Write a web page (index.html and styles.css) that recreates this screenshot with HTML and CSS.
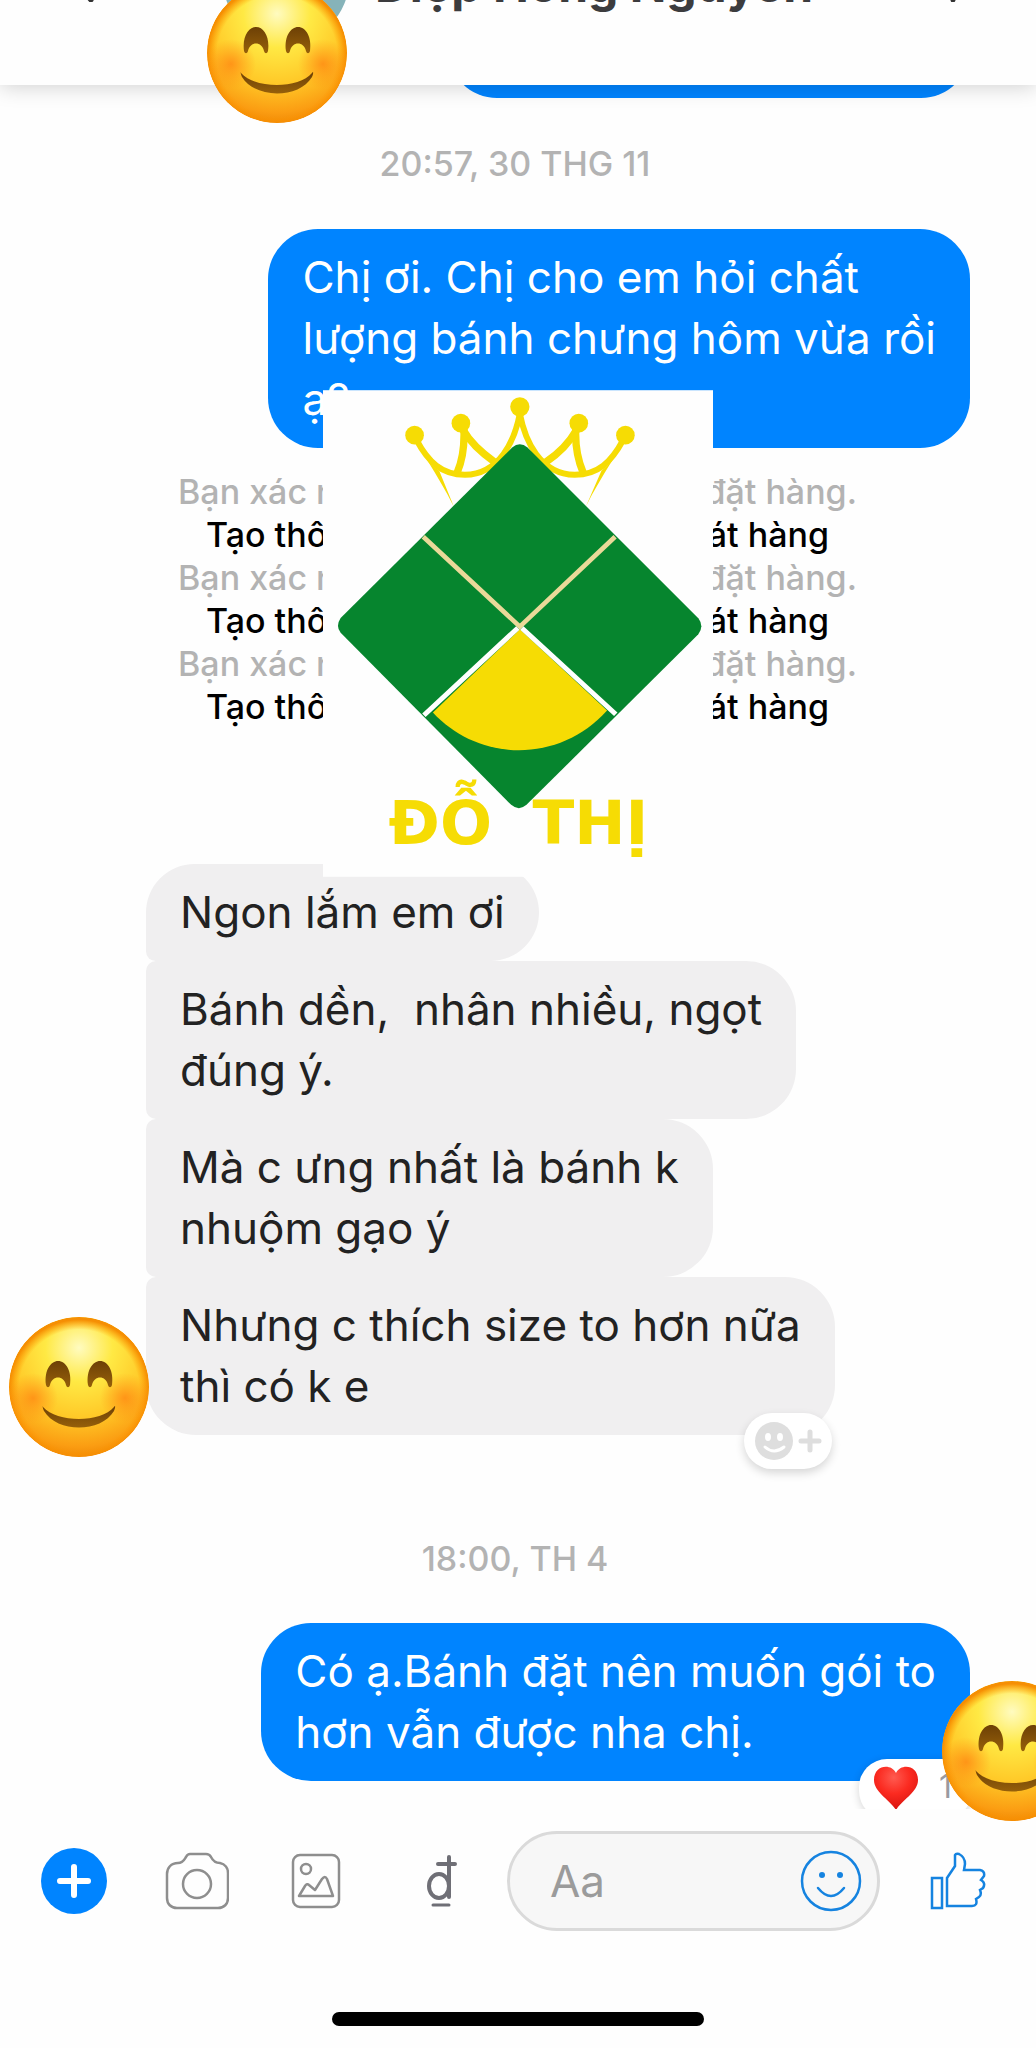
FILE: index.html
```html
<!DOCTYPE html>
<html lang="vi">
<head>
<meta charset="utf-8">
<meta name="viewport" content="width=device-width, initial-scale=1">
<title>Diệp Hồng Nguyên</title>
<link rel="stylesheet" href="styles.css">
</head>
<body>
<svg class="defs" aria-hidden="true">
  <defs>
    <radialGradient id="face" cx="50%" cy="22%" r="80%">
      <stop offset="0" stop-color="#fffbc0"/>
      <stop offset=".3" stop-color="#ffe944"/>
      <stop offset=".62" stop-color="#ffc928"/>
      <stop offset=".88" stop-color="#fb9d12"/>
      <stop offset="1" stop-color="#ee8504"/>
    </radialGradient>
    <radialGradient id="rim" cx="50%" cy="52%" r="50%">
      <stop offset=".86" stop-color="#ff9a00" stop-opacity="0"/>
      <stop offset="1" stop-color="#f58a00" stop-opacity=".95"/>
    </radialGradient>
    <radialGradient id="blush">
      <stop offset="0" stop-color="#ff7e10" stop-opacity=".7"/>
      <stop offset="1" stop-color="#ff8a10" stop-opacity="0"/>
    </radialGradient>
    <linearGradient id="brown" x1="0" y1="0" x2="0" y2="1">
      <stop offset="0" stop-color="#6d4006"/>
      <stop offset="1" stop-color="#96600a"/>
    </linearGradient>
    <clipPath id="disc"><circle cx="70" cy="70" r="70"/></clipPath>
    <symbol id="smile" viewBox="0 0 140 140">
      <g clip-path="url(#disc)">
        <circle cx="70" cy="70" r="70" fill="url(#face)"/>
        <circle cx="70" cy="70" r="70" fill="url(#rim)"/>
        <circle cx="24" cy="81" r="25" fill="url(#blush)"/>
        <circle cx="116" cy="81" r="25" fill="url(#blush)"/>
      </g>
      <path d="M37 68C35 53 42 44 49 44c8 0 14 10 12 24-1 3-3 3-4 0-2-10-14-10-16 0-1 3-3 3-4 0z" fill="url(#brown)"/>
      <path d="M79 68c-2-15 5-24 12-24 8 0 14 10 12 24-1 3-3 3-4 0-2-10-14-10-16 0-1 3-3 3-4 0z" fill="url(#brown)"/>
      <path d="M34 90c14 16 58 16 71 0 2-3 1 2 0 4-13 22-57 22-70 0-1-2-2-7-1-4z" fill="url(#brown)"/>
    </symbol>
  </defs>
</svg>

<header class="topbar">
  <button class="icon-btn back" aria-label="Quay lại"><svg viewBox="0 0 24 40" width="24" height="40"><path d="M20 2 4 20l16 18" fill="none" stroke="#333" stroke-width="5" stroke-linecap="round"/></svg></button>
  <span class="avatar"><svg class="emoji"><use href="#smile"/></svg></span>
  <h1 class="name">Diệp Hồng Nguyên</h1>
  <button class="icon-btn call" aria-label="Gọi"><svg viewBox="0 0 24 40" width="24" height="40"><path d="M4 2l8 36 8-36" fill="none" stroke="#333" stroke-width="5" stroke-linejoin="round"/></svg></button>
</header>

<main class="thread">
  <div class="bubble sent stub"></div>
  <time class="stamp">20:57, 30 THG 11</time>
  <p class="bubble sent">Chị ơi. Chị cho em hỏi chất<br>lượng bánh chưng hôm vừa rồi<br>ạ?</p>

  <div class="notices">
    <p class="note"><span>Bạn xác nhận</span><span>đặt hàng.</span></p>
    <a class="note action" href="#"><span>Tạo thông tin</span><span>phát hàng</span></a>
    <p class="note"><span>Bạn xác nhận</span><span>đặt hàng.</span></p>
    <a class="note action" href="#"><span>Tạo thông tin</span><span>phát hàng</span></a>
    <p class="note"><span>Bạn xác nhận</span><span>đặt hàng.</span></p>
    <a class="note action" href="#"><span>Tạo thông tin</span><span>phát hàng</span></a>
    <svg class="logo" viewBox="69 30 1171 1461" role="img" aria-label="Đỗ Thị">
      <rect x="69" y="30" width="1171" height="1461" fill="#fefefe"/>
      <g fill="none" stroke="#f6dc04" stroke-width="18">
        <path d="M660 100C645 180 600 282 495 284 425 284 385 245 350 180"/>
        <path d="M660 100C675 180 720 282 825 284 895 284 935 245 970 180"/>
        <path d="M492 145c2 45-4 95-20 132M828 145c-2 45 6 95 22 132" stroke-width="22"/>
        <path d="M490 150c20 35 55 68 95 96M830 150c-20 35-50 68-92 96" stroke-width="22"/>
      </g>
      <g fill="#f6dc04">
        <path d="M350 190 396 255 418 272 462 380C440 335 405 275 350 190zM970 190 924 255 905 272 858 380C880 335 915 275 970 190z"/>
        <circle cx="344" cy="165" r="28"/><circle cx="483" cy="129" r="28"/><circle cx="660" cy="80" r="29"/><circle cx="837" cy="129" r="28"/><circle cx="977" cy="165" r="28"/>
      </g>
      <path d="M637 202q23-20 46 0L1196 715q18 23 0 48L680 1275q-23 20-46 0L122 758q-16-20 0-44z" fill="#06852e"/>
      <path d="M370 470 660 740 946 470" fill="none" stroke="#ead999" stroke-width="14"/>
      <path d="M399 998 660 748 922 992C780 1150 540 1150 399 998z" fill="#f6dc04"/>
      <path d="M372 1006 654 744M666 744 948 1003" stroke="#fff" stroke-width="15"/>
      <g fill="#f6dc04" class="logo-text"><text x="266" y="1392">ĐỖ</text><text x="698" y="1392">THỊ</text></g>
    </svg>
  </div>

  <p class="bubble received first">Ngon lắm em ơi</p>
  <p class="bubble received">Bánh dền,&nbsp; nhân nhiều, ngọt<br>đúng ý.</p>
  <p class="bubble received">Mà c ưng nhất là bánh k<br>nhuộm gạo ý</p>
  <div class="bubble received last">
    <p>Nhưng c thích size to hơn nữa<br>thì có k e</p>
    <svg class="emoji sender"><use href="#smile"/></svg>
    <button class="react" aria-label="Thêm cảm xúc"><svg viewBox="0 0 88 56" width="88" height="56"><circle cx="30" cy="28" r="19" fill="#dedede"/><g fill="#fff"><ellipse cx="24" cy="24" rx="3" ry="4"/><ellipse cx="36" cy="24" rx="3" ry="4"/></g><path d="M21 34q9 8 19 0" fill="none" stroke="#fff" stroke-width="3" stroke-linecap="round"/><path d="M66 19v18M57 28h18" stroke="#dedede" stroke-width="5" stroke-linecap="round"/></svg></button>
  </div>

  <time class="stamp later">18:00, TH 4</time>
  <div class="bubble sent final">
    <p>Có ạ.Bánh đặt nên muốn gói to<br>hơn vẫn được nha chị.</p>
    <div class="hearts">
      <div class="pill"><svg viewBox="0 0 46 46" width="46" height="46"><defs><radialGradient id="red" cx="45%" cy="25%" r="75%"><stop offset="0" stop-color="#ff5a50"/><stop offset=".5" stop-color="#fb2a20"/><stop offset="1" stop-color="#d8140f"/></radialGradient></defs><path d="M23 8C18-2 1 0 1 15c0 12 15 19 22 30 7-11 22-18 22-30C45 0 28-2 23 8z" fill="url(#red)"/></svg><span>1</span></div>
    </div>
    <svg class="emoji edge"><use href="#smile"/></svg>
  </div>
</main>

<footer class="composer">
  <button class="icon-btn" aria-label="Thêm"><svg viewBox="0 0 66 66" width="66" height="66"><circle cx="33" cy="33" r="33" fill="#0084ff"/><path d="M33 19v28M19 33h28" stroke="#fff" stroke-width="6" stroke-linecap="round"/></svg></button>
  <button class="icon-btn camera" aria-label="Máy ảnh"><svg viewBox="0 0 64 58" width="64" height="58" fill="none" stroke="#8e8e8e" stroke-width="2.5"><path d="M13 11c5 0 6-3 8-6 1-2 2-3 4-3h16c3 0 4 1 5 3 2 4 4 6 9 6 5 1 8 5 8 10v25c0 6-4 10-10 10H12C6 56 2 52 2 46V22c0-6 4-11 11-11z"/><circle cx="32" cy="32" r="14"/></svg></button>
  <button class="icon-btn photo" aria-label="Ảnh"><svg viewBox="0 0 50 56" width="50" height="56" fill="none" stroke="#8e8e8e" stroke-width="2.5" stroke-linejoin="round"><rect x="2" y="2" width="46" height="52" rx="7"/><circle cx="15" cy="16" r="5"/><path d="M8 43 14 33q2-3 4-1l6 5 7-11q3-4 5 0l6 17z"/></svg></button>
  <button class="icon-btn money" aria-label="Chuyển tiền"><svg viewBox="0 0 30 52" width="30" height="52" fill="none" stroke="#6f6f76" stroke-width="4" stroke-linecap="round"><path d="M22 2v40M11 9h17"/><ellipse cx="12" cy="31" rx="10" ry="12"/><path d="M6 50h16" stroke-width="3"/></svg></button>
  <div class="field">
    <input type="text" placeholder="Aa" aria-label="Tin nhắn">
    <button class="icon-btn" aria-label="Biểu tượng cảm xúc"><svg viewBox="0 0 62 62" width="62" height="62" fill="none" stroke="#1583e0" stroke-width="2.5"><circle cx="31" cy="31" r="29"/><path d="M18 38q13 16 26 0" stroke-linecap="round"/><g fill="#1583e0" stroke="none"><circle cx="22" cy="25" r="3"/><circle cx="40" cy="25" r="3"/></g></svg></button>
  </div>
  <button class="icon-btn" aria-label="Thích"><svg viewBox="0 0 56 58" width="56" height="58" fill="none" stroke="#1583e0" stroke-width="2.5"><path d="M2 26h10v30H2zM17 26l8-12V3q1-2 4-1 6 3 6 10l-1 6h16q5 1 4 6l-3 4q5 3 2 8l-3 2q2 5-1 7l-3 2q2 7-4 7H17z"/></svg></button>
</footer>
<div class="home-bar"></div>
</body>
</html>
```
FILE: styles.css
```css
* { box-sizing: border-box; }
body {
  margin: 0;
  min-height: 100vh;
  display: flex;
  flex-direction: column;
  background: #fefefe;
  color: #222;
  font-family: Inter, "Liberation Sans", sans-serif;
  overflow-x: hidden;
}
p, h1 { margin: 0; }
button { border: 0; padding: 0; background: none; font: inherit; }
svg { display: block; }
.defs { position: absolute; width: 0; height: 0; }
.emoji { width: 140px; height: 140px; }

.topbar {
  display: flex;
  height: 85px;
  padding: 0 71px;
  background: #fefefe;
  box-shadow: 0 2px 20px rgba(0, 0, 0, .18);
  position: relative;
  z-index: 2;
}
.back, .call { margin-top: -38px; align-self: flex-start; }
.avatar {
  width: 126px;
  height: 126px;
  margin: -83px 26px 0 128px;
  border-radius: 50%;
  background: #86b3b9;
  position: relative;
}
.avatar .emoji { position: absolute; left: -16px; top: 66px; }
.name {
  flex: 1;
  margin-top: -43px;
  font-size: 48px;
  line-height: 56px;
  font-weight: 700;
  color: #3c3c3e;
  white-space: nowrap;
}

.thread {
  display: flex;
  flex-direction: column;
  align-items: flex-start;
  padding: 0 66px 0 146px;
}
.stamp {
  margin: 46px 6px 45px 0;
  padding-right: 80px;
  align-self: center;
  font-size: 34px;
  line-height: 40px;
  font-weight: 500;
  color: #b3b3b3;
}
.bubble {
  padding: 18px 34px;
  border-radius: 50px;
  font-size: 44px;
  line-height: 61px;
  white-space: nowrap;
}
.sent { align-self: flex-end; background: #0084ff; color: #fff; position: relative; }
.stub { width: 522px; height: 98px; margin: -85px 0 0; }
.received {
  background: #f0eff0;
  border-radius: 10px 50px 50px 10px;
}
.first { border-top-left-radius: 50px; }
.last { border-bottom-left-radius: 50px; position: relative; }
.sender { position: absolute; left: -137px; top: 40px; }
.react {
  position: absolute;
  right: 3px;
  bottom: -34px;
  border-radius: 28px;
  background: #fff;
  box-shadow: 0 4px 10px rgba(0, 0, 0, .16);
}

.notices {
  align-self: stretch;
  display: flex;
  flex-direction: column;
  padding: 22px 113px 0 32px;
  margin-bottom: 136px;
  position: relative;
}
.note {
  display: flex;
  justify-content: space-between;
  font-size: 34px;
  line-height: 43px;
  font-weight: 500;
  color: #b3b3b3;
}
.action { padding: 0 28px; color: #000; text-decoration: none; }
.logo { position: absolute; left: 177px; top: -58px; width: 390px; height: 487px; }
.logo-text { font: 700 184px "DejaVu Sans", sans-serif; }

.later { margin: 104px 6px 44px 0; }
.hearts {
  position: absolute;
  right: -2px;
  bottom: -28px;
  height: 60px;
  padding: 10px 0 0 10px;
  overflow: hidden;
}
.pill {
  display: flex;
  align-items: flex-start;
  gap: 20px;
  width: 113px;
  height: 60px;
  padding: 6px 14px;
  border-radius: 28px;
  background: #fff;
  box-shadow: 0 2px 8px rgba(0, 0, 0, .16);
  color: #9a9aa0;
  font-size: 32px;
  line-height: 44px;
}
.edge { position: absolute; right: -112px; top: 58px; }

.composer {
  display: flex;
  align-items: center;
  gap: 50px;
  padding: 50px 50px 0 41px;
}
.icon-btn { flex: none; }
.camera { padding-left: 8px; }
.photo { padding-left: 12px; }
.money { padding-left: 36px; }
.field {
  flex: 1;
  min-width: 0;
  display: flex;
  align-items: center;
  height: 100px;
  padding: 0 15px 0 40px;
  border: 3px solid #dadada;
  border-radius: 50px;
  background: #f7f7f7;
}
.field input {
  flex: 1;
  min-width: 0;
  border: 0;
  padding: 0;
  background: none;
  font: 44px/56px Inter, "Liberation Sans", sans-serif;
  outline: 0;
}
.field input::placeholder { color: #9b9b9b; opacity: 1; }
.home-bar {
  width: 36%;
  height: 14px;
  margin: auto auto 22px;
  border-radius: 7px;
  background: #000;
}
```
